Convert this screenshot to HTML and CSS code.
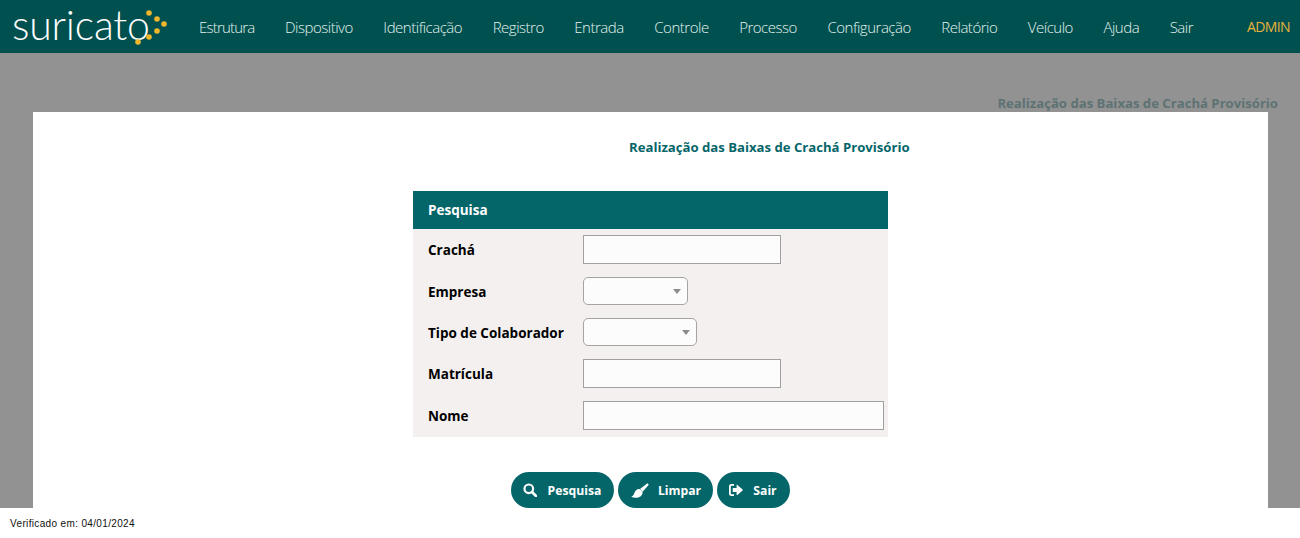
FILE: index.html
```html
<!DOCTYPE html>
<html>
<head>
    <title>Realização das Baixas de Crachá Provisório</title>
    <link rel="stylesheet" href="styles.css">
</head>
<body>
    <header class="top-bar">
        <div class="logo">
            <span class="logo-text">suricato</span>
            <svg class="logo-dots" width="34" height="38" viewBox="0 0 34 38">
                <circle cx="16" cy="6" r="2.8"/>
                <circle cx="24" cy="12" r="2.8"/>
                <circle cx="31" cy="17" r="2.8"/>
                <circle cx="24" cy="24" r="2.8"/>
                <circle cx="16" cy="30" r="2.8"/>
                <circle cx="5" cy="35" r="2.8"/>
            </svg>
        </div>
        <nav class="menu">
            <a>Estrutura</a>
            <a>Dispositivo</a>
            <a>Identificação</a>
            <a>Registro</a>
            <a>Entrada</a>
            <a>Controle</a>
            <a>Processo</a>
            <a>Configuração</a>
            <a>Relatório</a>
            <a>Veículo</a>
            <a>Ajuda</a>
            <a>Sair</a>
        </nav>
        <span class="user-name">ADMIN</span>
    </header>

    <main class="backdrop">
        <h2 class="back-title">Realização das Baixas de Crachá Provisório</h2>
        <section class="panel">
            <h1 class="panel-title">Realização das Baixas de Crachá Provisório</h1>
            <form class="search-form">
                <div class="form-head">Pesquisa</div>
                <div class="form-body">
                    <div class="form-row">
                        <label>Crachá</label>
                        <input type="text" class="field">
                    </div>
                    <div class="form-row">
                        <label>Empresa</label>
                        <div class="combo combo-short"></div>
                    </div>
                    <div class="form-row">
                        <label>Tipo de Colaborador</label>
                        <div class="combo combo-long"></div>
                    </div>
                    <div class="form-row">
                        <label>Matrícula</label>
                        <input type="text" class="field">
                    </div>
                    <div class="form-row">
                        <label>Nome</label>
                        <input type="text" class="field field-wide">
                    </div>
                </div>
            </form>
            <div class="actions">
                <button type="button" class="btn btn-search">
                    <svg width="14" height="14" viewBox="0 0 14 14" fill="none" stroke="#fff" stroke-width="2.2">
                        <circle cx="5.8" cy="5.8" r="4.3"/>
                        <path d="M9 9l4 4" stroke-linecap="round" stroke-width="2.6"/>
                    </svg>
                    Pesquisa
                </button>
                <button type="button" class="btn btn-clear">
                    <svg width="18" height="15" viewBox="0 0 18 15" fill="#fff">
                        <path d="M16.400.2l1.400 1.500-6.200 7-2.600-2.600z"/>
                        <path d="M8.600 6l3 3c.2 2.500-2 5.400-5.600 5.700-2.200.2-4.200-.2-5.900-1 1.700-.6 2.500-1.500 3-3C3.700 8 5.800 5.800 8.600 6z"/>
                    </svg>
                    Limpar
                </button>
                <button type="button" class="btn btn-exit">
                    <svg width="14" height="12" viewBox="0 0 14 12" fill="#fff">
                        <path d="M5 0v1.800H2.400c-.4 0-.6.2-.6.600v7.200c0 .4.200.6.600.6H5V12H2.200C1 12 0 11 0 9.800V2.200C0 1 1 0 2.200 0z"/>
                        <path d="M8.400 1L13.600 5.600c.2.200.2.600 0 .8L8.400 11c-.3.300-.8.100-.8-.3V8H4.200c-.3 0-.5-.2-.5-.5v-3c0-.3.200-.5.500-.5h3.400V1.300c0-.4.500-.6.800-.3z"/>
                    </svg>
                    Sair
                </button>
            </div>
        </section>
    </main>

    <footer class="page-foot">Verificado em: 04/01/2024</footer>
</body>
</html>
```

FILE: styles.css
```css
* {
    box-sizing: border-box;
}
html, body {
    height: 100%;
}
body {
    display: flex;
    flex-direction: column;
    margin: 0;
    overflow: hidden;
    font: 13.500px "Open Sans", sans-serif;
    background: #fff;
}

/* top bar */
.top-bar {
    display: flex;
    align-items: center;
    flex: none;
    height: 53px;
    padding: 0 10px 0 12px;
    background: #00504f;
}
.logo {
    display: flex;
    align-items: flex-start;
    flex: none;
    width: 187px;
    height: 53px;
    color: #fff;
}
.logo-text {
    font: 300 41px/50px "Lato", sans-serif;
    letter-spacing: -0.2px;
}
.logo-dots {
    margin: 7px 0 0 -17px;
    fill: #f0b62c;
}
.menu {
    display: flex;
    gap: 30.500px;
    flex: 1;
}
.menu a {
    color: #e4f3ee;
    font: 300 15px/20px "Open Sans", sans-serif;
    letter-spacing: -0.48px;
}
.menu a:first-child {
    letter-spacing: -0.8px;
}
.user-name {
    color: #e8b23c;
    font: 400 14px/20px "Open Sans", sans-serif;
    letter-spacing: -0.6px;
}

/* grey area behind the dialog */
.backdrop {
    display: flex;
    flex-direction: column;
    flex: none;
    height: 455px;
    padding-top: 42px;
    background: #929292;
}
.back-title {
    height: 17px;
    margin: 0;
    padding-right: 22px;
    color: #5d7273;
    font: 700 13.150px/17px "Open Sans", sans-serif;
    text-align: right;
}
.panel {
    display: flex;
    flex-direction: column;
    align-items: center;
    flex: 1;
    margin: 0 32px 0 33px;
    background: #fff;
}
.panel-title {
    align-self: flex-start;
    height: 18px;
    margin: 26px 0 35px 596px;
    color: #05666a;
    font: 700 13.150px/18px "Open Sans", sans-serif;
}

/* search form */
.search-form {
    width: 475px;
    margin-left: -1px;
}
.form-head {
    height: 38px;
    padding-left: 15.500px;
    color: #fff;
    background: #05666a;
    font: 700 13.500px/38px "Open Sans", sans-serif;
}
.form-body {
    display: flex;
    flex-direction: column;
    gap: 13px;
    height: 208px;
    padding: 6px 4px 7px 15.500px;
    background: #f4f0ef;
}
.form-row {
    display: flex;
    align-items: center;
}
.form-row label {
    width: 154.500px;
    padding-top: 1px;
    color: #000;
    font-weight: 700;
}
.field {
    width: 198px;
    height: 29px;
    border: 1px solid #a19f9f;
    background: #fcfcfc;
}
.field-wide {
    width: 301px;
}
.combo {
    position: relative;
    height: 28px;
    border: 1px solid #a5a3a3;
    border-radius: 5px;
    background: #fcfcfc;
}
.combo::after {
    content: "";
    position: absolute;
    top: 11px;
    right: 6px;
    border: 4px solid transparent;
    border-top: 5px solid #8c8c8c;
    border-bottom: 0;
}
.combo-short {
    width: 105px;
}
.combo-long {
    width: 114px;
}

/* buttons */
.actions {
    display: flex;
    gap: 4px;
    margin-top: 35px;
    margin-left: -1px;
}
.btn {
    display: flex;
    align-items: center;
    justify-content: center;
    height: 36px;
    padding: 0;
    border: 0;
    border-radius: 18px;
    color: #fff;
    background: #05666a;
    font: 700 12.200px "Open Sans", sans-serif;
}
.btn-search {
    gap: 11px;
    width: 103px;
}
.btn-clear {
    gap: 9px;
    width: 95px;
    padding-left: 2px;
}
.btn-exit {
    gap: 10px;
    width: 73px;
}

.page-foot {
    padding: 10px 0 0 10px;
    color: #111;
    font: 10px/12px "Liberation Sans", sans-serif;
    letter-spacing: 0.35px;
}
```
